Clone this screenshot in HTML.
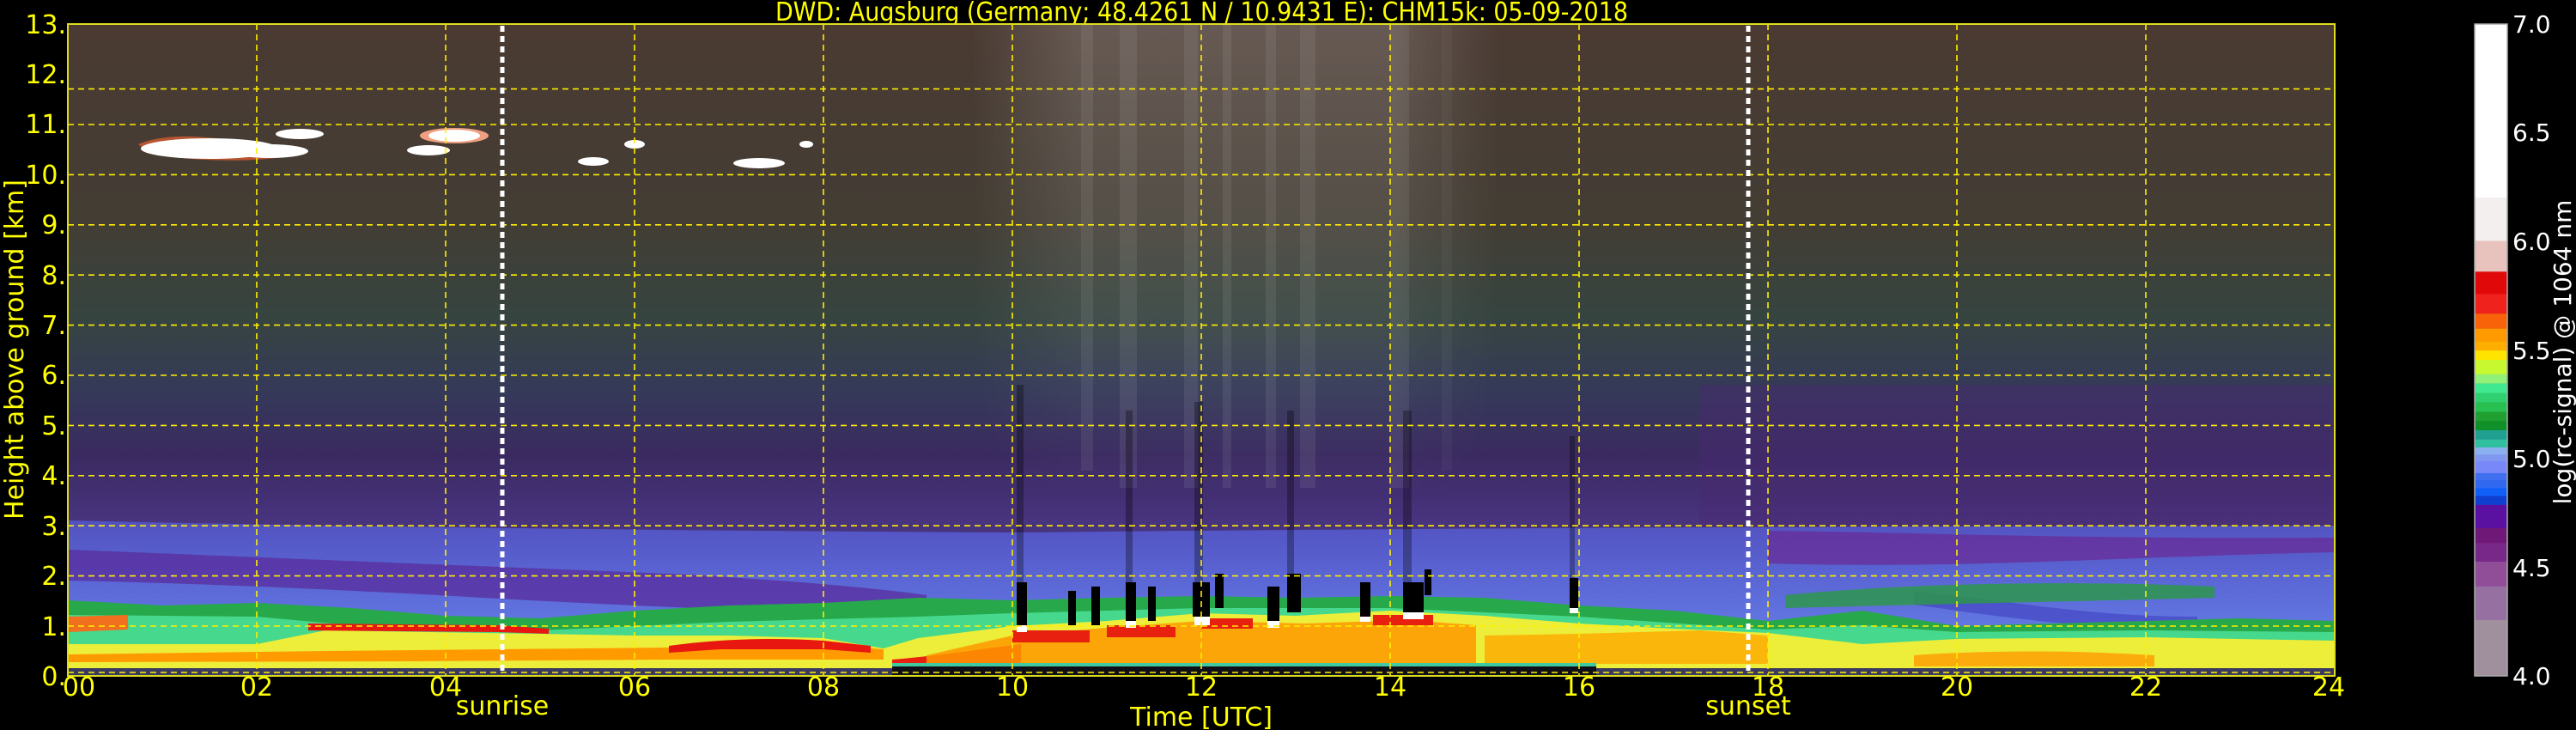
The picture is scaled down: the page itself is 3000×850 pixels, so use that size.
<!DOCTYPE html>
<html><head><meta charset="utf-8"><style>html,body{margin:0;padding:0;background:#000;}svg{display:block}</style></head>
<body>
<svg width="3000" height="850" viewBox="0 0 3000 850" xmlns="http://www.w3.org/2000/svg" font-family="'DejaVu Sans','Liberation Sans',sans-serif">
<defs>
<linearGradient id="bg" x1="0" y1="0" x2="0" y2="1">
<stop offset="0" stop-color="#4a3a32"/><stop offset="0.3" stop-color="#433d34"/>
<stop offset="0.45" stop-color="#364440"/><stop offset="0.56" stop-color="#353a58"/>
<stop offset="0.66" stop-color="#3a2a60"/><stop offset="0.76" stop-color="#48337e"/><stop offset="1" stop-color="#48337e"/>
</linearGradient>
<linearGradient id="blue" x1="0" y1="0" x2="0" y2="1">
<stop offset="0" stop-color="#5252c0"/><stop offset="0.45" stop-color="#5c6ad8"/><stop offset="1" stop-color="#6a88ec"/>
</linearGradient>
<linearGradient id="mid" x1="0" y1="0" x2="0" y2="1">
<stop offset="0" stop-color="#fff" stop-opacity="0.16"/><stop offset="0.7" stop-color="#fff" stop-opacity="0.05"/><stop offset="1" stop-color="#fff" stop-opacity="0"/>
</linearGradient>
<linearGradient id="midx" x1="0" y1="0" x2="1" y2="0">
<stop offset="0" stop-color="#fff" stop-opacity="0"/><stop offset="0.2" stop-color="#fff" stop-opacity="1"/><stop offset="0.8" stop-color="#fff" stop-opacity="1"/><stop offset="1" stop-color="#fff" stop-opacity="0"/>
</linearGradient>
<mask id="mm"><rect x="1050" y="0" width="620" height="560" fill="url(#midx)"/></mask>
<clipPath id="cp"><rect x="0" y="0" width="2640" height="759"/></clipPath>
</defs>

<text x="903" y="24" font-size="30" fill="#ffff00" textLength="993" lengthAdjust="spacingAndGlyphs">DWD: Augsburg (Germany; 48.4261 N / 10.9431 E):    CHM15k: 05-09-2018</text>

<g transform="translate(79,28)">
<g clip-path="url(#cp)">
<rect width="2640" height="759" fill="url(#bg)"/>
<rect x="1900" y="420" width="740" height="170" fill="#4a2a70" opacity="0.45"/>
<g mask="url(#mm)">
<rect x="1050" y="0" width="620" height="560" fill="url(#mid)"/>
<g fill="#fff" opacity="0.07">
<rect x="1180" y="0" width="14" height="520"/><rect x="1225" y="0" width="20" height="540"/>
<rect x="1300" y="0" width="16" height="540"/><rect x="1345" y="0" width="10" height="540"/>
<rect x="1395" y="0" width="12" height="540"/><rect x="1435" y="0" width="18" height="540"/>
<rect x="1540" y="0" width="22" height="540"/><rect x="1600" y="0" width="12" height="520"/>
</g>
</g>
<g fill="#ffffff">
<path d="M82,140 C110,128 150,130 180,134 C215,136 250,140 270,150 C250,158 200,160 160,158 C120,156 95,152 82,140Z" fill="#e86030" opacity="0.7"/>
<ellipse cx="165" cy="145" rx="80" ry="12"/>
<ellipse cx="235" cy="148" rx="45" ry="8"/>
<ellipse cx="270" cy="128" rx="28" ry="6"/>
<ellipse cx="450" cy="130" rx="40" ry="9" fill="#f0a080"/>
<ellipse cx="450" cy="130" rx="30" ry="7"/>
<ellipse cx="420" cy="147" rx="25" ry="6"/>
<ellipse cx="660" cy="140" rx="12" ry="5"/>
<ellipse cx="805" cy="162" rx="30" ry="6"/>
<ellipse cx="612" cy="160" rx="18" ry="5"/>
<ellipse cx="860" cy="140" rx="8" ry="4"/>
</g>
<path d="M0,578 C300,585 700,590 1100,592 C1500,588 1900,585 2640,584 L2640,759 L0,759Z" fill="url(#blue)"/>
<path d="M0,612 C200,620 450,630 700,640 C850,648 950,658 1000,665 L1000,690 C850,685 650,678 450,666 C250,655 100,650 0,648Z" fill="#5a2c9c" opacity="0.75"/>
<path d="M1980,590 C2150,592 2350,600 2640,598 L2640,615 C2400,620 2200,635 1980,628Z" fill="#6a2a94" opacity="0.7"/>
<path d="M2150,660 C2250,670 2350,690 2480,690 L2480,705 C2350,705 2250,690 2150,676Z" fill="#4040c0" opacity="0.6"/>
<path d="M0,671 L110,677 L220,674 L330,680 L440,689 L550,692 L660,683 L770,677 L880,674 L990,668 L1100,671 L1210,668 L1320,666 L1430,668 L1540,666 L1650,668 L1760,677 L1870,683 L1980,695 L2090,683 L2200,701 L2310,698 L2420,695 L2530,692 L2640,695 L2640,759 L0,759Z" fill="#27a84a"/>
<path d="M2000,665 C2150,650 2350,648 2500,655 L2500,668 C2350,672 2150,676 2000,680Z" fill="#2a9a44" opacity="0.8"/>
<path d="M0,688 L220,690 L330,700 L550,706 L770,696 L990,690 L1100,686 L1320,680 L1540,680 L1760,690 L1980,705 L2090,700 L2200,708 L2420,706 L2640,708 L2640,759 L0,759Z" fill="#46d88c"/>
<path d="M0,722 L220,722 L300,706 L550,710 L660,712 L770,712 L880,715 L950,727 L990,715 L1100,701 L1210,695 L1320,686 L1430,689 L1540,683 L1650,689 L1760,698 L1870,704 L1980,709 L2090,722 L2200,716 L2420,714 L2640,718 L2640,752 L0,752Z" fill="#ecee3a"/>
<path d="M0,690 L70,688 L70,705 L0,708Z" fill="#f07020"/>
<path d="M0,734 L300,730 L500,728 L700,726 L850,720 L950,728 L950,740 L700,740 L400,742 L0,743Z" fill="#ff9a00"/>
<path d="M280,698 L500,700 L560,704 L560,710 L500,708 L280,706Z" fill="#e81810"/>
<path d="M700,724 C760,716 820,714 880,718 L935,724 L935,732 L880,728 L760,728 L700,732Z" fill="#e81810"/>
<path d="M960,740 C1020,735 1060,728 1110,722 L1110,745 L960,748Z" fill="#e82010"/>
<path d="M1000,735 L1100,712 L1220,702 L1320,695 L1440,698 L1560,694 L1640,700 L1640,745 L1000,745Z" fill="#ff9800" opacity="0.85"/>
<path d="M1650,712 L1760,710 L1900,706 L1980,712 L1980,745 L1650,745Z" fill="#ffa800" opacity="0.8"/>
<path d="M2150,735 C2250,728 2350,730 2430,735 L2430,748 L2150,748Z" fill="#ff9a00" opacity="0.8"/>
<g fill="#e82010">
<rect x="1100" y="706" width="90" height="14"/><rect x="1210" y="700" width="80" height="14"/>
<rect x="1320" y="692" width="60" height="12"/><rect x="1520" y="688" width="70" height="12"/>
</g>
<g fill="#000">
<rect x="1105" y="650" width="12" height="50"/><rect x="1165" y="660" width="9" height="40"/>
<rect x="1192" y="655" width="10" height="45"/><rect x="1232" y="650" width="12" height="45"/>
<rect x="1258" y="655" width="9" height="40"/><rect x="1310" y="650" width="20" height="40"/>
<rect x="1336" y="640" width="10" height="40"/><rect x="1397" y="655" width="14" height="40"/>
<rect x="1420" y="640" width="16" height="45"/><rect x="1505" y="650" width="12" height="40"/>
<rect x="1555" y="650" width="24" height="35"/><rect x="1580" y="635" width="8" height="30"/>
<rect x="1749" y="645" width="10" height="35"/>
</g>
<g fill="#000" opacity="0.3">
<rect x="1105" y="420" width="8" height="230"/><rect x="1232" y="450" width="8" height="200"/>
<rect x="1312" y="440" width="10" height="210"/><rect x="1420" y="450" width="8" height="190"/>
<rect x="1555" y="450" width="10" height="200"/><rect x="1749" y="480" width="6" height="165"/>
</g>
<g fill="#fff">
<rect x="1105" y="700" width="12" height="8"/><rect x="1232" y="695" width="12" height="8"/>
<rect x="1312" y="690" width="18" height="10"/><rect x="1397" y="695" width="14" height="8"/>
<rect x="1555" y="685" width="24" height="8"/><rect x="1749" y="680" width="10" height="6"/>
<rect x="1505" y="690" width="12" height="6"/>
</g>
<rect x="0" y="750" width="2640" height="9" fill="#3a3a60"/>
<rect x="960" y="748" width="820" height="11" fill="#101018"/>
<rect x="960" y="744" width="820" height="4" fill="#40c8a0"/>
</g>
<g stroke="#ffee00" stroke-width="1.6" stroke-dasharray="7,5" fill="none">
<path d="M0,75.6H2640M0,117H2640M0,175.4H2640M0,233.8H2640M0,292.2H2640M0,350.6H2640M0,409H2640M0,467.4H2640M0,525.8H2640M0,584.2H2640M0,642.6H2640M0,701H2640M0,755H2640"/>
<path d="M220,0V759M440,0V759M660,0V759M880,0V759M1100,0V759M1320,0V759M1540,0V759M1760,0V759M1980,0V759M2200,0V759M2420,0V759"/>
</g>
<g stroke="#fff" stroke-width="5" stroke-dasharray="7,5">
<path d="M506,2V759M1957,2V759"/>
</g>
<rect x="0" y="0" width="2640" height="759" fill="none" stroke="#dddd20" stroke-width="2"/>
</g>

<g font-size="30" fill="#ffff00" text-anchor="end">
<text x="77" y="39">13.</text><text x="77" y="97">12.</text><text x="77" y="155">11.</text>
<text x="77" y="214">10.</text><text x="77" y="272">9.</text><text x="77" y="331">8.</text>
<text x="77" y="389">7.</text><text x="77" y="447">6.</text><text x="77" y="506">5.</text>
<text x="77" y="564">4.</text><text x="77" y="623">3.</text><text x="77" y="681">2.</text>
<text x="77" y="740">1.</text><text x="77" y="798">0.</text>
</g>
<text transform="translate(27,407) rotate(-90)" font-size="30" fill="#ffff00" text-anchor="middle">Height above ground [km]</text>
<g font-size="30" fill="#ffff00" text-anchor="middle">
<text x="92" y="810">00</text><text x="299" y="810">02</text><text x="519" y="810">04</text>
<text x="739" y="810">06</text><text x="959" y="810">08</text><text x="1179" y="810">10</text>
<text x="1399" y="810">12</text><text x="1619" y="810">14</text><text x="1839" y="810">16</text>
<text x="2059" y="810">18</text><text x="2279" y="810">20</text><text x="2499" y="810">22</text>
<text x="2712" y="810">24</text>
<text x="585" y="832">sunrise</text><text x="2036" y="832">sunset</text>
<text x="1399" y="845">Time [UTC]</text>
</g>

<g>
<rect x="2882" y="28" width="38" height="202" fill="#ffffff"/>
<rect x="2882" y="230" width="38" height="51" fill="#f2efee"/>
<rect x="2882" y="280.5" width="38" height="36" fill="#e8c2bd"/>
<rect x="2882" y="316.3" width="38" height="26.5" fill="#e00808"/>
<rect x="2882" y="342.4" width="38" height="23" fill="#f0221e"/>
<rect x="2882" y="365.2" width="38" height="17.6" fill="#f86208"/>
<rect x="2882" y="382.6" width="38" height="14.8" fill="#ff9a00"/>
<rect x="2882" y="397.2" width="38" height="11.1" fill="#ffae00"/>
<rect x="2882" y="408.1" width="38" height="11.1" fill="#ffe400"/>
<rect x="2882" y="419" width="38" height="17" fill="#c8f830"/>
<rect x="2882" y="435.8" width="38" height="11" fill="#90f078"/>
<rect x="2882" y="446.6" width="38" height="11" fill="#40e890"/>
<rect x="2882" y="457.5" width="38" height="11" fill="#30d070"/>
<rect x="2882" y="468.3" width="38" height="11.6" fill="#28c050"/>
<rect x="2882" y="479.7" width="38" height="11" fill="#20a030"/>
<rect x="2882" y="490.6" width="38" height="10.6" fill="#109028"/>
<rect x="2882" y="501" width="38" height="11" fill="#20a090"/>
<rect x="2882" y="511.8" width="38" height="9.4" fill="#30c0a0"/>
<rect x="2882" y="521" width="38" height="8.5" fill="#8ab0f0"/>
<rect x="2882" y="529.3" width="38" height="8.2" fill="#8098f0"/>
<rect x="2882" y="537.3" width="38" height="13.8" fill="#7888f8"/>
<rect x="2882" y="550.9" width="38" height="8.9" fill="#4070f0"/>
<rect x="2882" y="559.6" width="38" height="8.9" fill="#3068f0"/>
<rect x="2882" y="568.3" width="38" height="9.4" fill="#1060f8"/>
<rect x="2882" y="577.5" width="38" height="10.5" fill="#1040d0"/>
<rect x="2882" y="587.8" width="38" height="27.4" fill="#5a10a0"/>
<rect x="2882" y="615" width="38" height="17.5" fill="#701878"/>
<rect x="2882" y="632.3" width="38" height="21.9" fill="#782888"/>
<rect x="2882" y="654" width="38" height="29" fill="#904e98"/>
<rect x="2882" y="682.8" width="38" height="39.3" fill="#9570a0"/>
<rect x="2882" y="721.9" width="38" height="65.1" fill="#a0909e"/>
<rect x="2882" y="28" width="38" height="759" fill="none" stroke="#aaa" stroke-width="1.5"/>
</g>
<g font-size="28" fill="#ffffff">
<text x="2926" y="38">7.0</text><text x="2926" y="164">6.5</text><text x="2926" y="291">6.0</text>
<text x="2926" y="418">5.5</text><text x="2926" y="544">5.0</text><text x="2926" y="671">4.5</text>
<text x="2926" y="797">4.0</text>
</g>
<text transform="translate(2994,410) rotate(-90)" font-size="28" fill="#ffffff" text-anchor="middle">log(rc-signal) @ 1064 nm</text>
</svg>
</body></html>
